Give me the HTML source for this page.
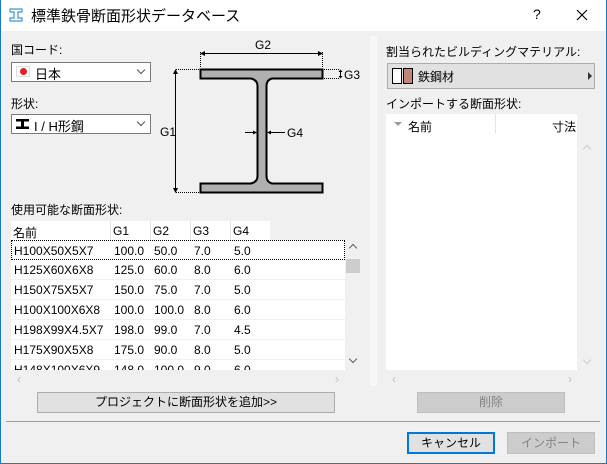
<!DOCTYPE html>
<html><head><meta charset="utf-8"><style>
*{box-sizing:border-box;margin:0;padding:0}
body{width:607px;height:464px;overflow:hidden;background:#f0f0f0;font-family:"Liberation Sans","Noto Sans CJK JP",sans-serif;font-size:12px;color:#000;position:relative}
.a{position:absolute}
.win{left:0;top:0;width:607px;height:464px;border:1px solid #1979ca;border-top:none}
.title{left:0;top:0;width:607px;height:31px;background:#fff}
.sel{background:#fff;border:1px solid #7a7a7a;height:20px}
.chev{width:6px;height:6px;border-right:1px solid #555;border-bottom:1px solid #555;transform:rotate(45deg)}
.btn{border:1px solid #adadad;background:#e1e1e1;text-align:center;line-height:19px}
.dis{background:#ccc;border-color:#bfbfbf;color:#838383}
.row{left:11px;width:334px;height:20px;background:#fff;border-bottom:1px solid #f0f0f0;line-height:20px}
.row span{position:absolute;top:0}
</style></head><body>
<div class="a title"></div>
<svg class="a" style="left:9px;top:8px" width="14" height="14" viewBox="0 0 14 14"><path d="M1 1H13V4H9V10H13V13H1V10H5V4H1Z" fill="#fff" stroke="#3c96d6" stroke-width="1.2"/></svg>
<div class="a" style="left:31px;top:5px;font-size:15px">標準鉄骨断面形状データベース</div>
<div class="a" style="left:533px;top:6px;font-size:14px">?</div>
<svg class="a" style="left:576px;top:9px" width="12" height="12"><path d="M1 1L11 11M11 1L1 11" stroke="#000" stroke-width="1.2"/></svg>
<div class="a win"></div>

<div class="a" style="left:11px;top:41px">国コード:</div>
<div class="a sel" style="left:11px;top:62px;width:140px"></div>
<div class="a" style="left:16px;top:66px;width:14px;height:11px;background:#fff;border:1px solid #ddd"></div>
<div class="a" style="left:20px;top:68px;width:7px;height:7px;border-radius:50%;background:#e02020"></div>
<div class="a" style="left:35px;top:64px;font-size:13px">日本</div>
<div class="a chev" style="left:138px;top:67px"></div>
<div class="a" style="left:11px;top:95px">形状:</div>
<div class="a sel" style="left:11px;top:114px;width:140px"></div>
<svg class="a" style="left:15px;top:118px" width="15" height="12"><path d="M1 1H14V3.5H9V8.5H14V11H1V8.5H6V3.5H1Z" fill="#000"/></svg>
<div class="a" style="left:34px;top:116px;font-size:13px">I / H形鋼</div>
<div class="a chev" style="left:138px;top:119px"></div>

<svg class="a" style="left:160px;top:35px" width="205" height="165" viewBox="160 35 205 165">
<path d="M200.5 69.5H322.5V78.5H272Q266.5 80 266.5 86V176Q266.5 182 272 183.5H322.5V192.5H200.5V183.5H251Q257.5 182 257.5 176V86Q257.5 80 251 78.5H200.5Z" fill="#b0b0b0" stroke="#000" stroke-width="2"/>
<g stroke="#000" stroke-width="1" fill="none">
<path d="M175.5 70V192M201 53.5H322"/>
<path d="M200.5 52V68M322.5 52V68M176 69.5H199M176 192.5H199M324 69.5H340M324 78.5H340" stroke-dasharray="1 1"/>
<path d="M245 132.5H256M268 132.5H285"/>
<path d="M340.5 70V78"/>
</g>
<g fill="#000"><path d="M175.5 69L173 74H178Z M175.5 193L173 188H178Z M200 53.5L205 51V56Z M323 53.5L318 51V56Z M257 132.5L253 130.5V134.5Z M267 132.5L271 130.5V134.5Z M340.5 69.5L338.5 72H342.5Z M340.5 78.5L338.5 76H342.5Z"/></g>
<g font-family="Liberation Sans" font-size="12"><text x="255" y="49">G2</text><text x="344" y="79">G3</text><text x="160" y="136">G1</text><text x="287" y="137">G4</text></g>
</svg>

<div class="a" style="left:11px;top:201px">使用可能な断面形状:</div>
<div class="a" style="left:11px;top:221px;width:259px;height:19px;background:#fff"></div>
<div class="a" style="left:110px;top:221px;width:1px;height:19px;background:#e5e5e5"></div>
<div class="a" style="left:150px;top:221px;width:1px;height:19px;background:#e5e5e5"></div>
<div class="a" style="left:190px;top:221px;width:1px;height:19px;background:#e5e5e5"></div>
<div class="a" style="left:230px;top:221px;width:1px;height:19px;background:#e5e5e5"></div>
<div class="a" style="left:13px;top:224px">名前</div><div class="a" style="left:113px;top:224px">G1</div><div class="a" style="left:153px;top:224px">G2</div><div class="a" style="left:193px;top:224px">G3</div><div class="a" style="left:233px;top:224px">G4</div>
<div class="a" style="left:11px;top:240px;width:334px;height:130px;background:#fff;overflow:hidden">
<div class="a row" style="left:0;top:0;border:1px dotted #000"><span style="left:2px">H100X50X5X7</span><span style="left:102px">100.0</span><span style="left:142px">50.0</span><span style="left:182px">7.0</span><span style="left:222px">5.0</span></div>
<div class="a row" style="left:0;top:20px"><span style="left:3px">H125X60X6X8</span><span style="left:103px">125.0</span><span style="left:143px">60.0</span><span style="left:183px">8.0</span><span style="left:223px">6.0</span></div>
<div class="a row" style="left:0;top:40px"><span style="left:3px">H150X75X5X7</span><span style="left:103px">150.0</span><span style="left:143px">75.0</span><span style="left:183px">7.0</span><span style="left:223px">5.0</span></div>
<div class="a row" style="left:0;top:60px"><span style="left:3px">H100X100X6X8</span><span style="left:103px">100.0</span><span style="left:143px">100.0</span><span style="left:183px">8.0</span><span style="left:223px">6.0</span></div>
<div class="a row" style="left:0;top:80px"><span style="left:3px">H198X99X4.5X7</span><span style="left:103px">198.0</span><span style="left:143px">99.0</span><span style="left:183px">7.0</span><span style="left:223px">4.5</span></div>
<div class="a row" style="left:0;top:100px"><span style="left:3px">H175X90X5X8</span><span style="left:103px">175.0</span><span style="left:143px">90.0</span><span style="left:183px">8.0</span><span style="left:223px">5.0</span></div>
<div class="a row" style="left:0;top:120px"><span style="left:3px">H148X100X6X9</span><span style="left:103px">148.0</span><span style="left:143px">100.0</span><span style="left:183px">9.0</span><span style="left:223px">6.0</span></div>
</div>
<div class="a" style="left:346px;top:259px;width:14px;height:14px;background:#cdcdcd"></div>
<div class="a chev" style="left:350px;top:245px;transform:rotate(225deg);border-color:#606060"></div>
<div class="a chev" style="left:350px;top:356px;border-color:#606060"></div>
<div class="a" style="left:17px;top:372px;color:#c0c0c0">‹</div>
<div class="a" style="left:335px;top:372px;color:#c0c0c0">›</div>
<div class="a btn" style="left:37px;top:392px;width:298px;height:21px">プロジェクトに断面形状を追加&gt;&gt;</div>

<div class="a" style="left:370px;top:36px;width:7px;height:350px;background:#f7f7f7"></div>
<div class="a" style="left:386px;top:43px">割当られたビルディングマテリアル:</div>
<div class="a btn" style="left:387px;top:63px;width:208px;height:26px"></div>
<div class="a" style="left:392px;top:68px;width:10px;height:16px;background:#fff;border:1px solid #000"></div>
<div class="a" style="left:403px;top:68px;width:10px;height:16px;background:#c08478;border:1px solid #000"></div>
<div class="a" style="left:418px;top:68px">鉄鋼材</div>
<div class="a" style="left:588px;top:72px;border-left:4px solid #333;border-top:4px solid transparent;border-bottom:4px solid transparent"></div>
<div class="a" style="left:386px;top:95px">インポートする断面形状:</div>
<div class="a" style="left:386px;top:114px;width:191px;height:256px;background:#fff"></div>
<div class="a" style="left:495px;top:114px;width:1px;height:20px;background:#e5e5e5"></div>
<div class="a" style="left:394px;top:122px;border-top:4px solid #999;border-left:4px solid transparent;border-right:4px solid transparent"></div>
<div class="a" style="left:408px;top:118px">名前</div>
<div class="a" style="left:552px;top:118px">寸法</div>
<div class="a chev" style="left:584px;top:146px;transform:rotate(225deg);border-color:#ccc"></div>
<div class="a chev" style="left:584px;top:357px;border-color:#ccc"></div>
<div class="a" style="left:392px;top:372px;color:#c0c0c0">‹</div>
<div class="a" style="left:568px;top:372px;color:#c0c0c0">›</div>
<div class="a btn dis" style="left:417px;top:392px;width:148px;height:21px">削除</div>

<div class="a" style="left:6px;top:421px;width:594px;height:1px;background:#a0a0a0"></div>
<div class="a btn" style="left:407px;top:432px;width:88px;height:22px;border:2px solid #0078d7;line-height:18px">キャンセル</div>
<div class="a btn dis" style="left:507px;top:432px;width:88px;height:22px;line-height:20px">インポート</div>
</body></html>
